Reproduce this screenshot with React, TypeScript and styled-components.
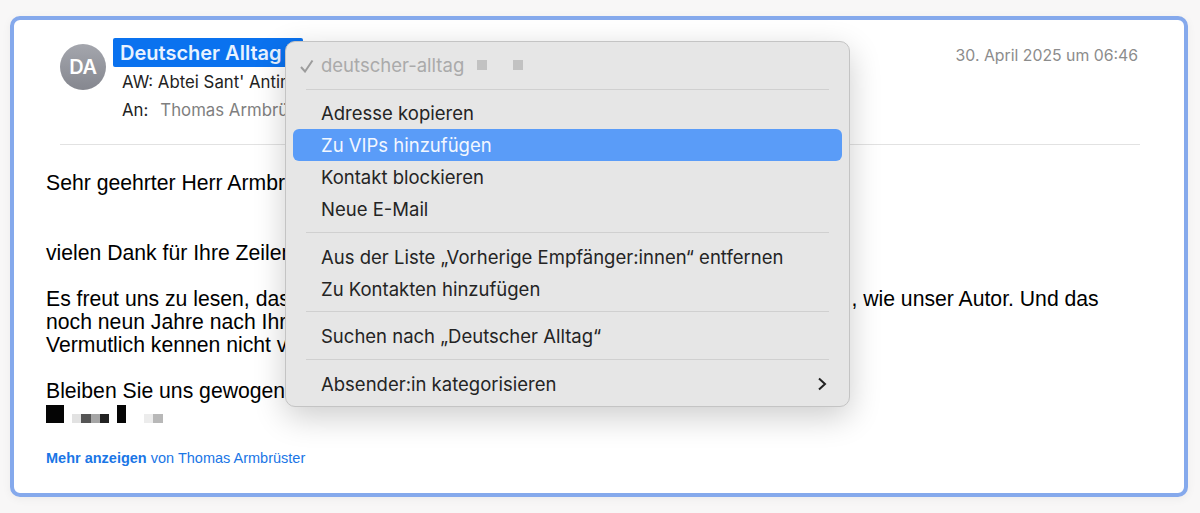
import React from "react";
import styled, { createGlobalStyle } from "styled-components";

const Global = createGlobalStyle`
  html, body { margin: 0; padding: 0; background: #f8f7f7; }
  body { width: 1200px; height: 513px; overflow: hidden; font-family: Inter, "Liberation Sans", sans-serif; }
`;

const Page = styled.div`
  box-sizing: border-box;
  width: 1200px;
  height: 513px;
  padding: 16px 12px 16px 10px;
`;

const Frame = styled.div`
  position: relative;
  box-sizing: border-box;
  height: 481px;
  background: #fff;
  border: 4px solid #85a9ec;
  border-radius: 10px;
  box-shadow: 0 2px 10px rgba(0, 0, 0, 0.05);
  padding: 18px 44px 0 32px;
`;

const Header = styled.header`
  display: flex;
  align-items: flex-start;
  margin-left: 14px;
  height: 106px;
  border-bottom: 1px solid #e2e2e2;
`;

const Avatar = styled.div`
  flex: none;
  display: flex;
  align-items: center;
  justify-content: center;
  width: 46px;
  height: 46px;
  margin: 6px 7px 0 0;
  border-radius: 50%;
  background: linear-gradient(#a4a6ad, #85878f);
  color: #fff;
  font-size: 20px;
  font-weight: 600;
  letter-spacing: -0.3px;
`;

const Meta = styled.div`
  flex: 1;
  display: flex;
  flex-direction: column;
  align-items: flex-start;
`;

const Sender = styled.div`
  box-sizing: border-box;
  height: 29px;
  width: 190px;
  padding-left: 7px;
  background: #0a72ef;
  border-radius: 2px;
  color: #e8f2ff;
  font-size: 20px;
  font-weight: 600;
  line-height: 30px;
  white-space: nowrap;
`;

const MetaLine = styled.div`
  margin: 2px 0 0 9px;
  height: 26px;
  font-size: 16.8px;
  line-height: 26px;
  color: #222;
  white-space: nowrap;
`;

const Muted = styled.span`
  margin-left: 12px;
  color: #7f7f7f;
`;

const DateText = styled.time`
  margin-top: 7px;
  margin-right: 2px;
  font-size: 15.8px;
  line-height: 22px;
  color: #8c8c8c;
  white-space: nowrap;
`;

const Body = styled.div`
  padding-top: 26px;
  color: #000;
  font-family: "Liberation Sans", Arial, sans-serif;
  font-size: 21.2px;
  line-height: 23px;
`;

const Para = styled.p<{ $gap?: number }>`
  margin: 0 0 ${(p) => p.$gap ?? 23}px;
  white-space: nowrap;
`;

const Hidden = styled.span<{ $w: number }>`
  display: inline-block;
  width: ${(p) => p.$w}px;
`;

const Mosaic = styled.div`
  display: flex;
  align-items: flex-end;
  height: 18px;
  margin-top: 3px;
`;

const Pixel = styled.i<{ $w: number; $h: number; $c: string; $ml?: number }>`
  display: block;
  width: ${(p) => p.$w}px;
  height: ${(p) => p.$h}px;
  margin-left: ${(p) => p.$ml ?? 0}px;
  background: ${(p) => p.$c};
`;

const More = styled.div`
  margin-top: 27px;
  font-size: 14.5px;
  line-height: 16px;
  color: #1a76e6;
`;

const Menu = styled.div`
  position: absolute;
  left: 271px;
  top: 21px;
  box-sizing: border-box;
  width: 565px;
  height: 366px;
  padding: 7px;
  background: #e6e6e6;
  border: 1px solid #c4c4c4;
  border-radius: 10px;
  box-shadow: 0 10px 32px rgba(0, 0, 0, 0.2);
  font-size: 18.5px;
  color: #242424;
`;

const Item = styled.div<{ $active?: boolean; $disabled?: boolean }>`
  display: flex;
  align-items: center;
  height: 32px;
  padding: 0 15px 0 28px;
  position: relative;
  border-radius: 6px;
  white-space: nowrap;
  background: ${(p) => (p.$active ? "#5a9cf8" : "transparent")};
  color: ${(p) => (p.$active ? "#f2f7ff" : p.$disabled ? "#aaaaaa" : "#242424")};
`;

const Check = styled.svg`
  position: absolute;
  left: 6px;
  top: 10px;
`;

const Square = styled.i<{ $ml: number }>`
  display: block;
  width: 10px;
  height: 10px;
  margin-left: ${(p) => p.$ml}px;
  background: #c2c2c2;
`;

const Chevron = styled.svg`
  margin-left: auto;
`;

const Sep = styled.div<{ $t?: number; $b?: number }>`
  height: 1px;
  margin: ${(p) => p.$t ?? 7}px 13px ${(p) => p.$b ?? 8}px;
  background: #d0d0d0;
`;

export default function App() {
  return (
    <Page>
      <Global />
      <Frame>
        <Header>
          <Avatar>DA</Avatar>
          <Meta>
            <Sender>Deutscher Alltag</Sender>
            <MetaLine>AW: Abtei Sant' Antimo</MetaLine>
            <MetaLine>An:<Muted>Thomas Armbrüster</Muted></MetaLine>
          </Meta>
          <DateText>30. April 2025 um 06:46</DateText>
        </Header>
        <Body>
          <Para $gap={47}>Sehr geehrter Herr Armbrüster,</Para>
          <Para>vielen Dank für Ihre Zeilen.</Para>
          <Para>
            Es freut uns zu lesen, dass<Hidden $w={551} />, wie unser Autor. Und das
            <br />
            noch neun Jahre nach Ihrer
            <br />
            Vermutlich kennen nicht viele
          </Para>
          <Para $gap={0}>Bleiben Sie uns gewogen</Para>
          <Mosaic>
            <Pixel $w={18} $h={18} $c="#050505" />
            <Pixel $w={9} $h={9} $c="#e2e2e2" $ml={8} />
            <Pixel $w={10} $h={9} $c="#555" />
            <Pixel $w={9} $h={9} $c="#a5a5a5" />
            <Pixel $w={9} $h={9} $c="#222" />
            <Pixel $w={9} $h={18} $c="#050505" $ml={8} />
            <Pixel $w={9} $h={9} $c="#ececec" $ml={18} />
            <Pixel $w={10} $h={9} $c="#b8b8b8" />
          </Mosaic>
          <More><b>Mehr anzeigen</b> von Thomas Armbrüster</More>
        </Body>
        <Menu>
          <Item $disabled>
            <Check width="16" height="14" viewBox="0 0 16 14">
              <path d="M2 8l4 4.5L13.5 1.5" fill="none" stroke="#9c9c9c" strokeWidth="2" />
            </Check>
            deutscher-alltag
            <Square $ml={13} />
            <Square $ml={26} />
          </Item>
          <Sep $t={8} $b={7} />
          <Item>Adresse kopieren</Item>
          <Item $active>Zu VIPs hinzufügen</Item>
          <Item>Kontakt blockieren</Item>
          <Item>Neue E-Mail</Item>
          <Sep />
          <Item>Aus der Liste „Vorherige Empfänger:innen“ entfernen</Item>
          <Item>Zu Kontakten hinzufügen</Item>
          <Sep $t={6} />
          <Item>Suchen nach „Deutscher Alltag“</Item>
          <Sep />
          <Item>
            Absender:in kategorisieren
            <Chevron width="10" height="14" viewBox="0 0 10 14">
              <path d="M2 1.5L8 7l-6 5.5" fill="none" stroke="#222" strokeWidth="2" />
            </Chevron>
          </Item>
        </Menu>
      </Frame>
    </Page>
  );
}
